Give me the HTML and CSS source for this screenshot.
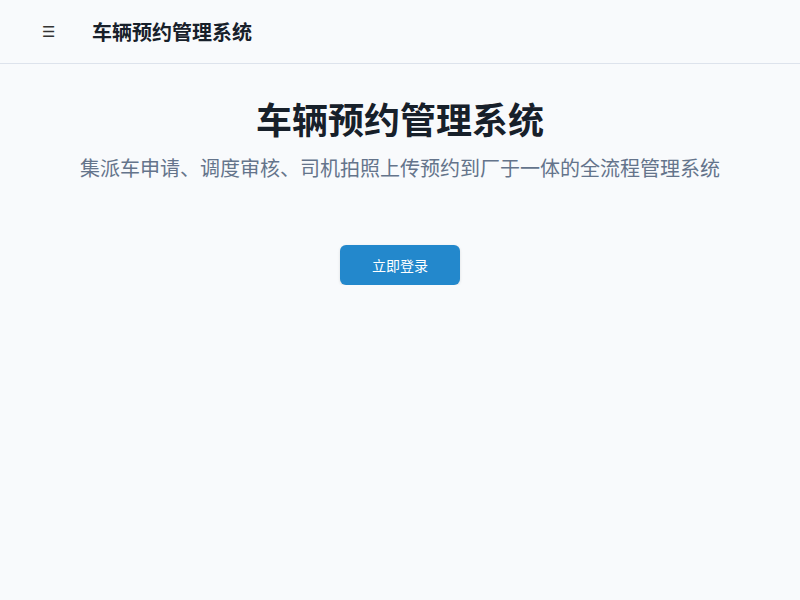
FILE: index.html
```html
<!DOCTYPE html>
<html lang="zh">
<head>
<meta charset="utf-8">
<link rel="stylesheet" href="styles.css">
</head>
<body>
<header class="topbar">
  <span class="menu">☰</span>
  <span class="brand">车辆预约管理系统</span>
</header>
<main class="hero">
  <h1 class="title">车辆预约管理系统</h1>
  <p class="subtitle">集派车申请、调度审核、司机拍照上传预约到厂于一体的全流程管理系统</p>
  <button class="login">立即登录</button>
</main>
</body>
</html>
```
FILE: styles.css
```css
html, body {
  margin: 0;
  padding: 0;
  background: #f8fafc;
  font-family: "Noto Sans CJK SC", "Noto Sans", sans-serif;
  color: #17202a;
}
.topbar {
  height: 64px;
  box-sizing: border-box;
  border-bottom: 1px solid #dde3ec;
  display: flex;
  align-items: center;
  padding-left: 42px;
}
.menu {
  font-size: 15px;
  width: 16px;
  color: #333;
  font-family: "DejaVu Sans", sans-serif;
}
.brand {
  margin-left: 34px;
  font-size: 20px;
  font-weight: 700;
  color: #17202a;
}
.hero {
  display: flex;
  flex-direction: column;
  align-items: center;
  padding-top: 28px;
}
.title {
  margin: 0;
  font-size: 36px;
  line-height: 52px;
  font-weight: 700;
  color: #17202a;
}
.subtitle {
  margin: 9px 0 0;
  font-size: 20px;
  line-height: 30px;
  color: #64748b;
}
.login {
  margin-top: 62px;
  width: 120px;
  height: 40px;
  border: none;
  border-radius: 6px;
  background: #2388cc;
  color: #fff;
  font-family: "Noto Sans CJK SC", sans-serif;
  font-size: 14px;
  box-shadow: 0 1px 3px rgba(0,0,0,0.12);
}
```
